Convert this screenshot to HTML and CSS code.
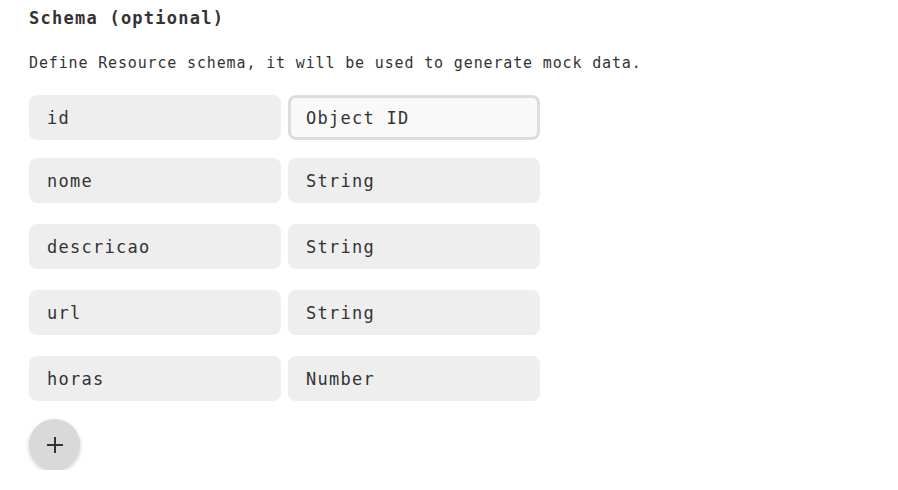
FILE: index.html
```html
<!DOCTYPE html>
<html lang="en">
<head>
    <meta charset="UTF-8">
    <meta name="viewport" content="width=device-width, initial-scale=1.0">
    <title>Resource schema</title>
    <link rel="stylesheet" href="styles.css">
</head>
<body>
    <!-- Schema section -->
    <div class="schema">
        <h3>Schema (optional)</h3>
        <p class="hint">Define Resource schema, it will be used to generate mock data.</p>

        <div class="field-row first">
            <input type="text" class="field" value="id">
            <input type="text" class="field active" value="Object ID">
        </div>
        <div class="field-row">
            <input type="text" class="field" value="nome">
            <input type="text" class="field" value="String">
        </div>
        <div class="field-row">
            <input type="text" class="field" value="descricao">
            <input type="text" class="field" value="String">
        </div>
        <div class="field-row">
            <input type="text" class="field" value="url">
            <input type="text" class="field" value="String">
        </div>
        <div class="field-row">
            <input type="text" class="field" value="horas">
            <input type="text" class="field" value="Number">
        </div>

        <button class="add-btn" type="button" aria-label="Add field">
            <svg width="18" height="18" viewBox="0 0 18 18">
                <path d="M9 1v16M1 9h16" stroke="#333" stroke-width="2" fill="none"/>
            </svg>
        </button>
    </div>
</body>
</html>
```

FILE: styles.css
```css
/* Global Styles */
* {
    box-sizing: border-box;
    margin: 0;
    padding: 0;
}

body {
    font-family: "DejaVu Sans Mono", monospace;
    background-color: #fff;
    color: #333;
}

/* Schema Section */
.schema {
    padding: 6px 29px 0;
}

.schema h3 {
    font-size: 17px;
    font-weight: bold;
    letter-spacing: 1.25px;
    line-height: 24px;
}

.hint {
    font-size: 15px;
    letter-spacing: 0.85px;
    line-height: 22px;
    margin-top: 22px;
    margin-bottom: 21px;
}

/* Field rows */
.field-row {
    display: grid;
    grid-template-columns: 252px 252px;
    gap: 7px;
}

.field-row + .field-row {
    margin-top: 21px;
}

.field-row.first {
    margin-bottom: -3px;
}

.field {
    height: 45px;
    padding: 1px 18px 0;
    border: none;
    border-radius: 8px;
    background-color: #eee;
    color: #333;
    font-family: "DejaVu Sans Mono", monospace;
    font-size: 17px;
    letter-spacing: 1.25px;
    outline: none;
}

.field.active {
    background-color: #f9f9f9;
    border: 3px solid #ddd;
    padding: 1px 15px 0;
}

/* Add button */
.add-btn {
    display: flex;
    align-items: center;
    justify-content: center;
    width: 51px;
    height: 51px;
    margin-top: 18px;
    border: none;
    border-radius: 50%;
    background-color: #d9d9d9;
    box-shadow: 0 2px 4px rgba(0, 0, 0, 0.2);
    cursor: pointer;
}
```
